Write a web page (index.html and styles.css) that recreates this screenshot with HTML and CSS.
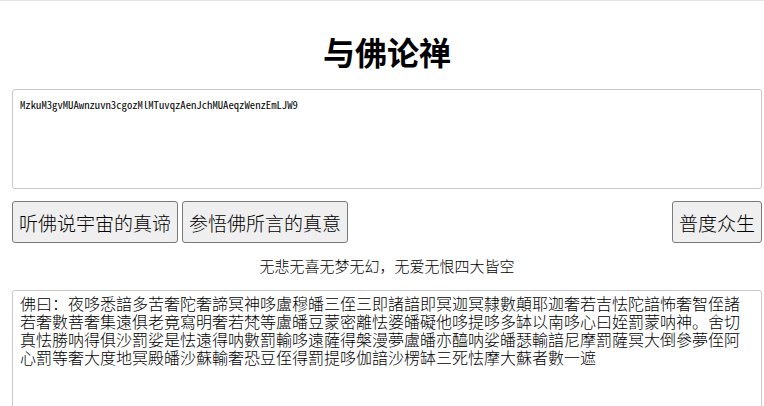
FILE: index.html
```html
<!DOCTYPE html>
<html lang="zh-CN">
<head>
  <meta charset="UTF-8" />
  <meta name="viewport" content="width=device-width, initial-scale=1.0"/>
  <title>与佛论禅</title>
  <link rel="stylesheet" href="styles.css">
</head>
<body>

  <div class="container">
    <h1>与佛论禅</h1>

    <!-- plain text -->
    <textarea id="plain" class="box box-plain">MzkuM3gvMUAwnzuvn3cgozMlMTuvqzAenJchMUAeqzWenzEmLJW9</textarea>

    <!-- actions -->
    <div class="actions">
      <div class="actions-left">
        <button type="button">听佛说宇宙的真谛</button>
        <button type="button">参悟佛所言的真意</button>
      </div>
      <button type="button">普度众生</button>
    </div>

    <p class="motto">无悲无喜无梦无幻，无爱无恨四大皆空</p>

    <!-- buddha text -->
    <textarea id="buddha" class="box box-buddha">佛曰：夜哆悉諳多苦奢陀奢諦冥神哆盧穆皤三侄三即諸諳即冥迦冥隸數顛耶迦奢若吉怯陀諳怖奢智侄諸若奢數菩奢集遠俱老竟寫明奢若梵等盧皤豆蒙密離怯婆皤礙他哆提哆多缽以南哆心曰姪罰蒙呐神。舍切真怯勝呐得俱沙罰娑是怯遠得呐數罰輸哆遠薩得槃漫夢盧皤亦醯呐娑皤瑟輸諳尼摩罰薩冥大倒參夢侄阿心罰等奢大度地冥殿皤沙蘇輸奢恐豆侄得罰提哆伽諳沙楞缽三死怯摩大蘇者數一遮</textarea>
  </div>

</body>
</html>
```

FILE: styles.css
```css
* {
  box-sizing: border-box;
}

body {
  margin: 0;
  border-top: 1px solid #e3e3e3;
  background: #fff;
  color: #000;
  font-family: "Noto Sans CJK SC", "Noto Sans", sans-serif;
}

.container {
  padding: 0 2px 0 12px;
}

h1 {
  margin: 30px 0 18px;
  font-size: 32px;
  line-height: 40px;
  font-weight: bold;
  text-align: center;
}

/* text boxes */
.box {
  display: block;
  width: 100%;
  border: 1px solid #c8c8c8;
  border-radius: 3px;
  padding: 7px;
  resize: none;
  color: #000;
  background: #fff;
  outline: none;
}

.box-plain {
  height: 100px;
  font-family: "Noto Sans Mono CJK SC", "Liberation Mono", monospace;
  font-size: 10.7px;
  font-weight: 300;
  line-height: 18px;
  padding-top: 6px;
}

.box-buddha {
  height: 200px;
  font-family: "Noto Sans CJK TC", "Noto Sans CJK SC", sans-serif;
  font-size: 16px;
  font-weight: 300;
  line-height: 18px;
  padding-top: 3px;
}

/* buttons */
.actions {
  display: flex;
  justify-content: space-between;
  margin-top: 12px;
}

.actions-left {
  display: flex;
  gap: 4px;
}

button {
  height: 42px;
  padding: 0 6px;
  background: #efefef;
  border: 1px solid #7a7a7a;
  border-radius: 3px;
  color: #000;
  font-family: "Noto Sans CJK SC", sans-serif;
  font-size: 19px;
  font-weight: 300;
  line-height: 1;
  cursor: pointer;
}

button:hover {
  background: #e5e5e5;
}

.motto {
  margin: 13px 0 14px;
  font-size: 15px;
  font-weight: 300;
  line-height: 20px;
  text-align: center;
  color: #000;
}
```
